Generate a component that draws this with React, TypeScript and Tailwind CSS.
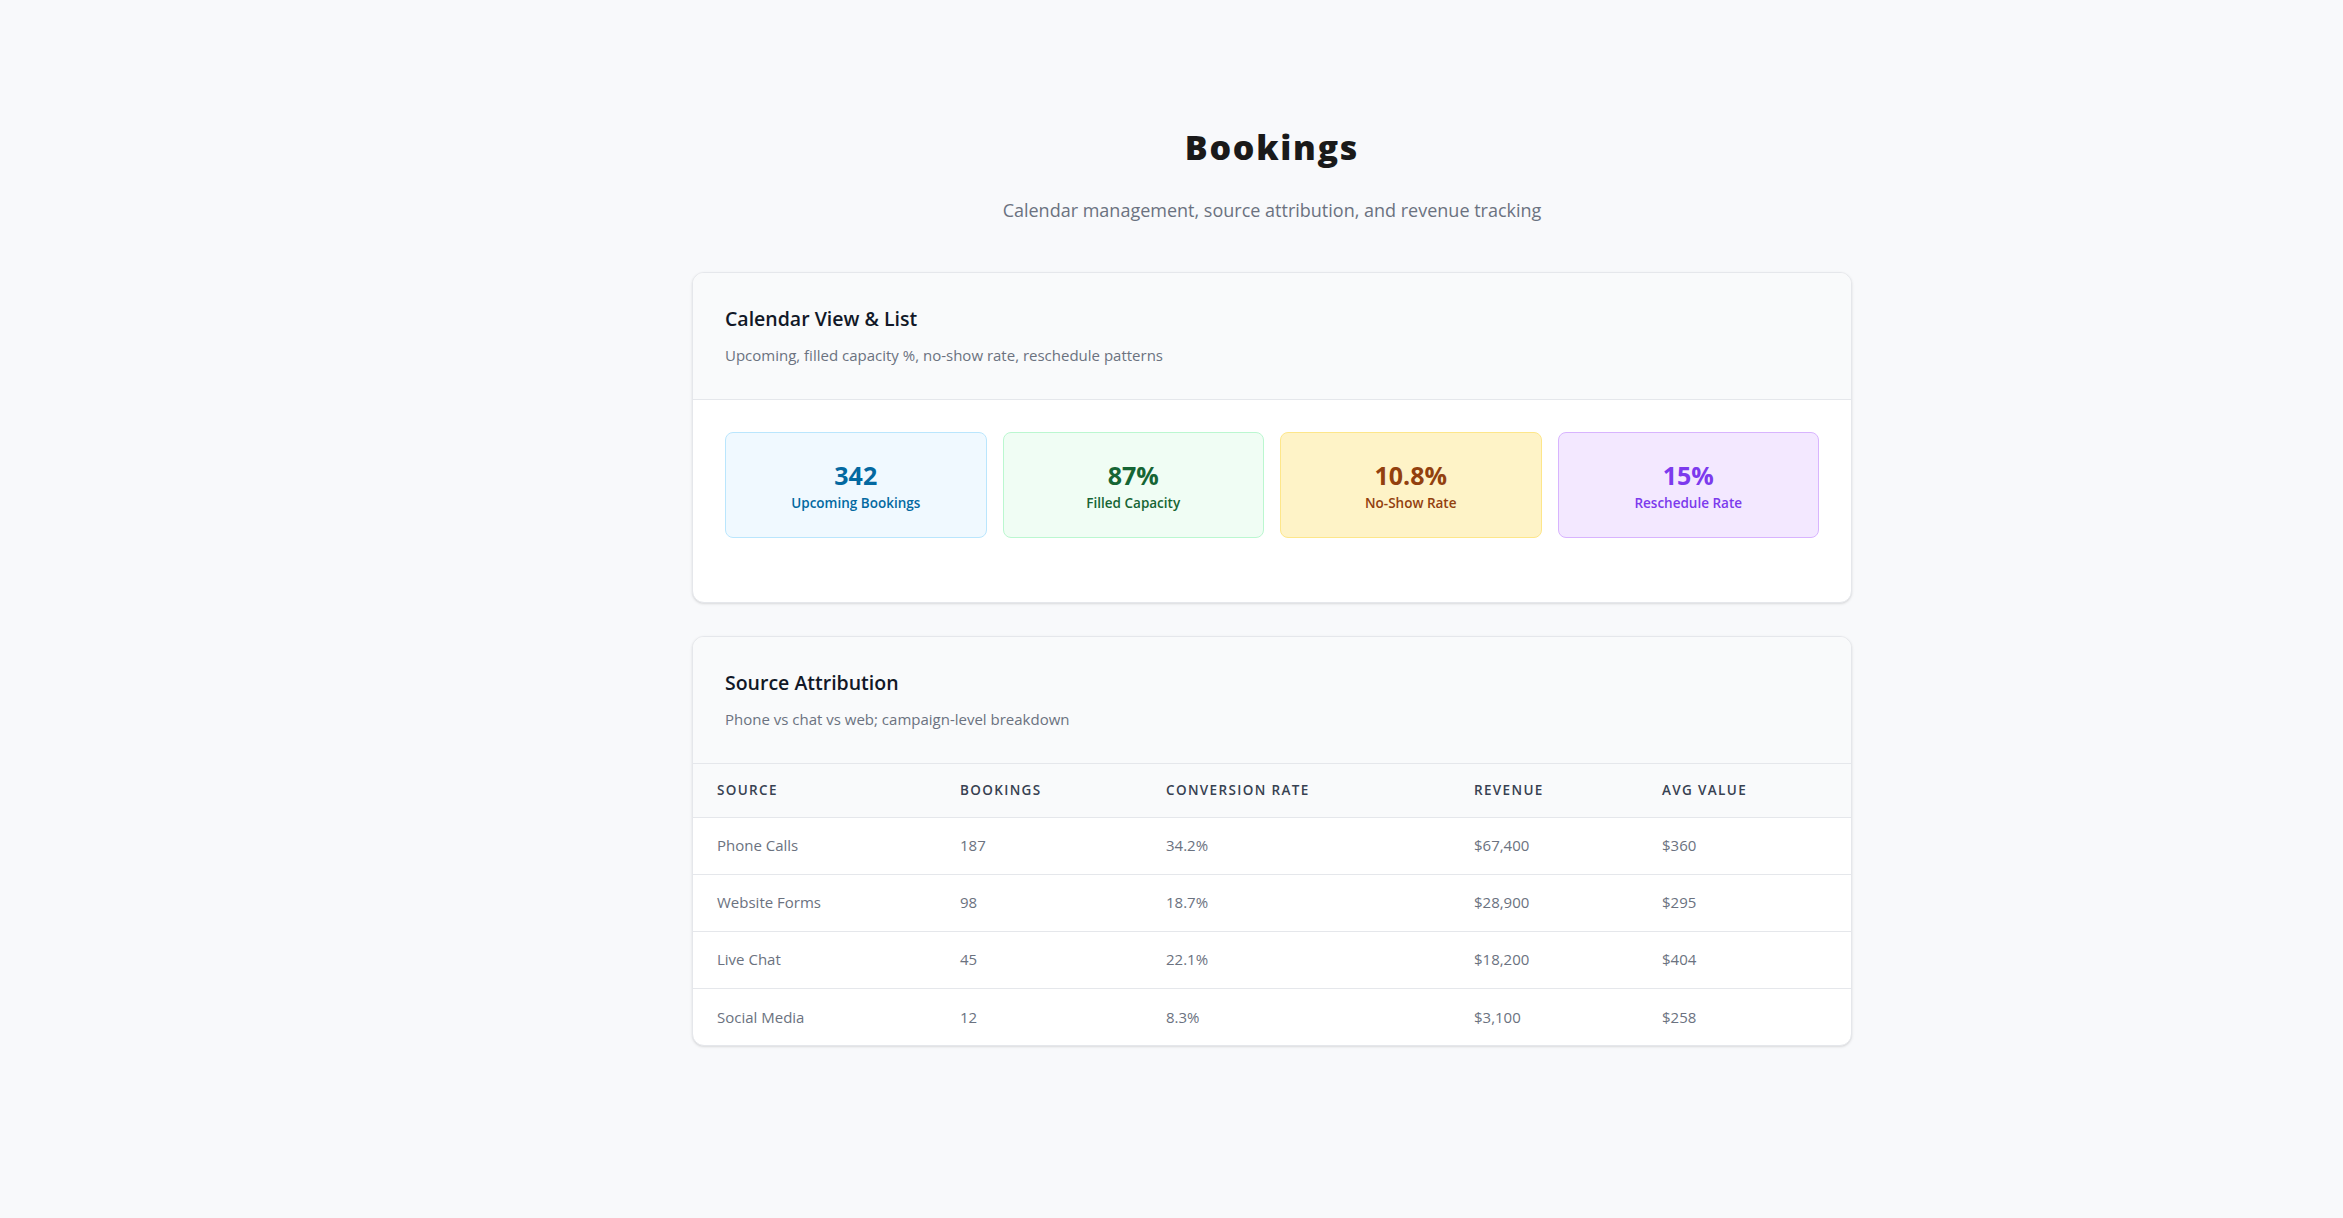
import React from "react";

const stats = [
  { value: "342", label: "Upcoming Bookings", box: "bg-[#f0f9ff] border-[#bae6fd]", text: "text-[#0369a1]" },
  { value: "87%", label: "Filled Capacity", box: "bg-[#f0fdf4] border-[#bbf7d0]", text: "text-[#166534]" },
  { value: "10.8%", label: "No-Show Rate", box: "bg-[#fef3c7] border-[#fde68a]", text: "text-[#92400e]" },
  { value: "15%", label: "Reschedule Rate", box: "bg-[#f3e8ff] border-[#d8b4fe]", text: "text-[#7c3aed]" },
];

const rows = [
  ["Phone Calls", "187", "34.2%", "$67,400", "$360"],
  ["Website Forms", "98", "18.7%", "$28,900", "$295"],
  ["Live Chat", "45", "22.1%", "$18,200", "$404"],
  ["Social Media", "12", "8.3%", "$3,100", "$258"],
];

function CardHeader({ title, subtitle }: { title: string; subtitle: string }) {
  return (
    <div className="bg-[#f9fafb] border-b border-[#e5e7eb] px-8 pt-8 pb-8">
      <h2 className="text-[19.5px] leading-[28px] font-semibold text-[#111827]">{title}</h2>
      <p className="mt-[10px] text-[15px] leading-[24px] text-[#6b7280]">{subtitle}</p>
    </div>
  );
}

export default function App() {
  return (
    <div
      className="min-h-screen bg-[#f8f9fb] flex"
      style={{ fontFamily: "'Open Sans', 'Noto Sans', sans-serif" }}
    >
      <div className="w-[201px] shrink-0" />
      <main className="flex-1 flex flex-col items-center pt-[127px] pb-16">
        <h1 className="text-[34px] leading-[40px] font-extrabold tracking-[0.05em] text-[#1a1a1a]">Bookings</h1>
        <p className="mt-[29px] text-[18px] leading-[28px] text-[#6b7280]">
          Calendar management, source attribution, and revenue tracking
        </p>

        <section className="mt-[48px] w-[1160px] bg-white border border-[#e5e7eb] rounded-xl overflow-hidden shadow-sm">
          <CardHeader title="Calendar View & List" subtitle="Upcoming, filled capacity %, no-show rate, reschedule patterns" />
          <div className="px-8 pt-8 pb-16">
            <div className="grid grid-cols-4 gap-4">
              {stats.map((s) => (
                <div key={s.label} className={`border rounded-lg py-6 flex flex-col items-center ${s.box}`}>
                  <div className={`text-[25px] leading-[36px] font-bold ${s.text}`}>{s.value}</div>
                  <div className={`text-[13.5px] leading-[20px] font-semibold ${s.text}`}>{s.label}</div>
                </div>
              ))}
            </div>
          </div>
        </section>

        <section className="mt-[33px] w-[1160px] bg-white border border-[#e5e7eb] rounded-xl overflow-hidden shadow-sm">
          <CardHeader title="Source Attribution" subtitle="Phone vs chat vs web; campaign-level breakdown" />
          <table className="w-full table-fixed border-collapse">
            <colgroup>
              <col className="w-[243px]" />
              <col className="w-[206px]" />
              <col className="w-[308px]" />
              <col className="w-[188px]" />
              <col />
            </colgroup>
            <thead>
              <tr className="bg-[#f9fafb] border-b border-[#e5e7eb]">
                {["Source", "Bookings", "Conversion Rate", "Revenue", "Avg Value"].map((h) => (
                  <th
                    key={h}
                    className="h-[53px] px-6 text-left text-[13.5px] font-semibold uppercase tracking-[0.1em] text-[#374151]"
                  >
                    {h}
                  </th>
                ))}
              </tr>
            </thead>
            <tbody>
              {rows.map((r, i) => (
                <tr key={r[0]} className={i < rows.length - 1 ? "border-b border-[#e5e7eb]" : ""}>
                  {r.map((c, j) => (
                    <td key={j} className="h-[57px] px-6 text-[15px] text-[#6b7280]">
                      {c}
                    </td>
                  ))}
                </tr>
              ))}
            </tbody>
          </table>
        </section>
      </main>
    </div>
  );
}
